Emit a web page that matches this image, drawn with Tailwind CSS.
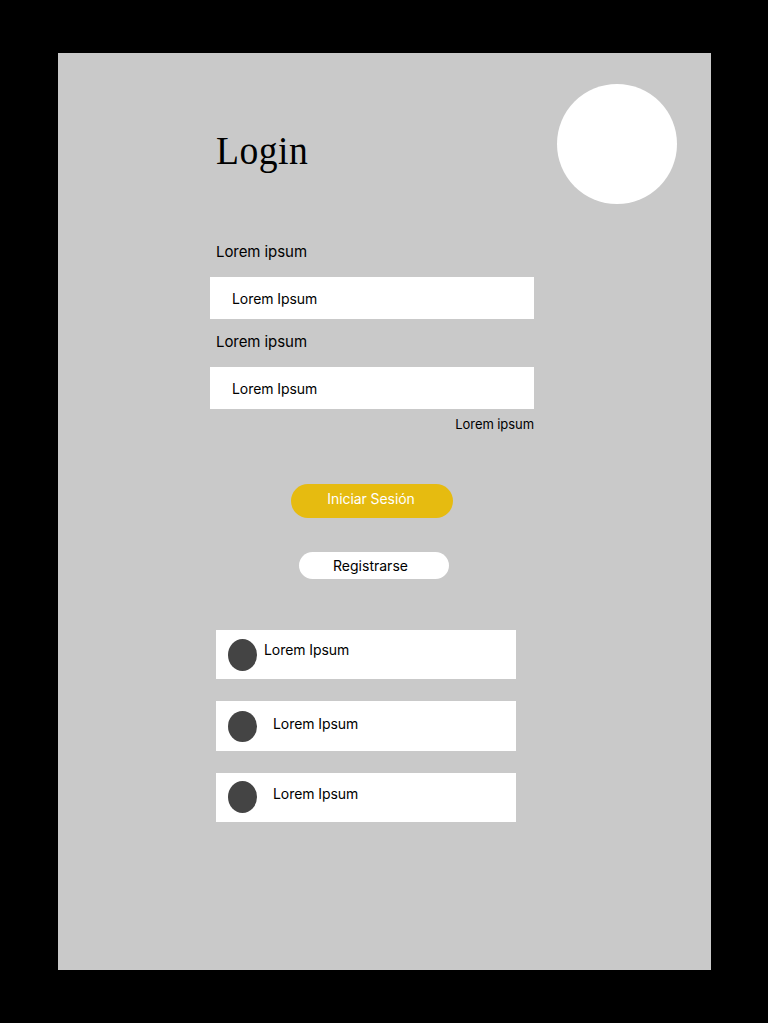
<!DOCTYPE html>
<html lang="es"><head><meta charset="utf-8"><title>Login</title>
<script src="https://cdn.jsdelivr.net/npm/@tailwindcss/browser@4"></script></head>
<body class="bg-black font-['Inter',sans-serif] text-black">
<div class="h-[1023px] w-[768px] overflow-hidden pt-[53px] pl-[58px]">
<main class="flex h-[917px] w-[653px] flex-col bg-[#c9c9c9] pl-[152px] tracking-[-0.07px]">
<header class="flex h-[190px] shrink-0 justify-between pr-[34px] pl-[6px]">
<h1 class="origin-left scale-x-[0.94] pt-[73px] font-['Liberation_Serif',serif] text-[40px] leading-[50px] tracking-[0.5px] whitespace-nowrap">Login</h1>
<div class="mt-[31px] size-[120px] rounded-full bg-white"></div>
</header>
<form class="flex w-[324px] flex-col">
<label class="h-[34px] pl-[6px] text-[15px] leading-[18px]">Lorem ipsum</label>
<div class="flex h-[42px] items-center bg-white pl-[22px] text-[14px]">Lorem Ipsum</div>
<label class="h-[48px] pt-[14px] pl-[6px] text-[15px] leading-[18px]">Lorem ipsum</label>
<div class="flex h-[42px] items-center bg-white pl-[22px] text-[14px]">Lorem Ipsum</div>
<a class="mt-[7px] text-right text-[13px] leading-[17px]">Lorem ipsum</a>
<button type="button" class="mt-[51px] ml-[81px] h-[34px] w-[162px] rounded-full bg-[#e6bb10] pr-[2px] pb-[5px] text-[14px] text-white">Iniciar Sesión</button>
<button type="button" class="mt-[34px] ml-[89px] h-[27px] w-[150px] rounded-full bg-white pr-[7px] text-[14px] tracking-normal">Registrarse</button>
</form>
<ul class="mt-[51px] ml-[6px] flex w-[300px] flex-col gap-[22px] text-[14px] leading-[17px]">
<li class="flex h-[49px] bg-white pl-[12px]"><span class="mt-[9px] h-[32px] w-[29px] rounded-[50%] bg-[#444]"></span><span class="mt-[11px] ml-[7px]">Lorem Ipsum</span></li>
<li class="flex h-[50px] bg-white pl-[12px]"><span class="mt-[10px] h-[31px] w-[29px] rounded-[50%] bg-[#444]"></span><span class="mt-[14px] ml-[16px]">Lorem Ipsum</span></li>
<li class="flex h-[49px] bg-white pl-[12px]"><span class="mt-[8px] h-[32px] w-[29px] rounded-[50%] bg-[#444]"></span><span class="mt-[12px] ml-[16px]">Lorem Ipsum</span></li>
</ul>
</main></div></body></html>
